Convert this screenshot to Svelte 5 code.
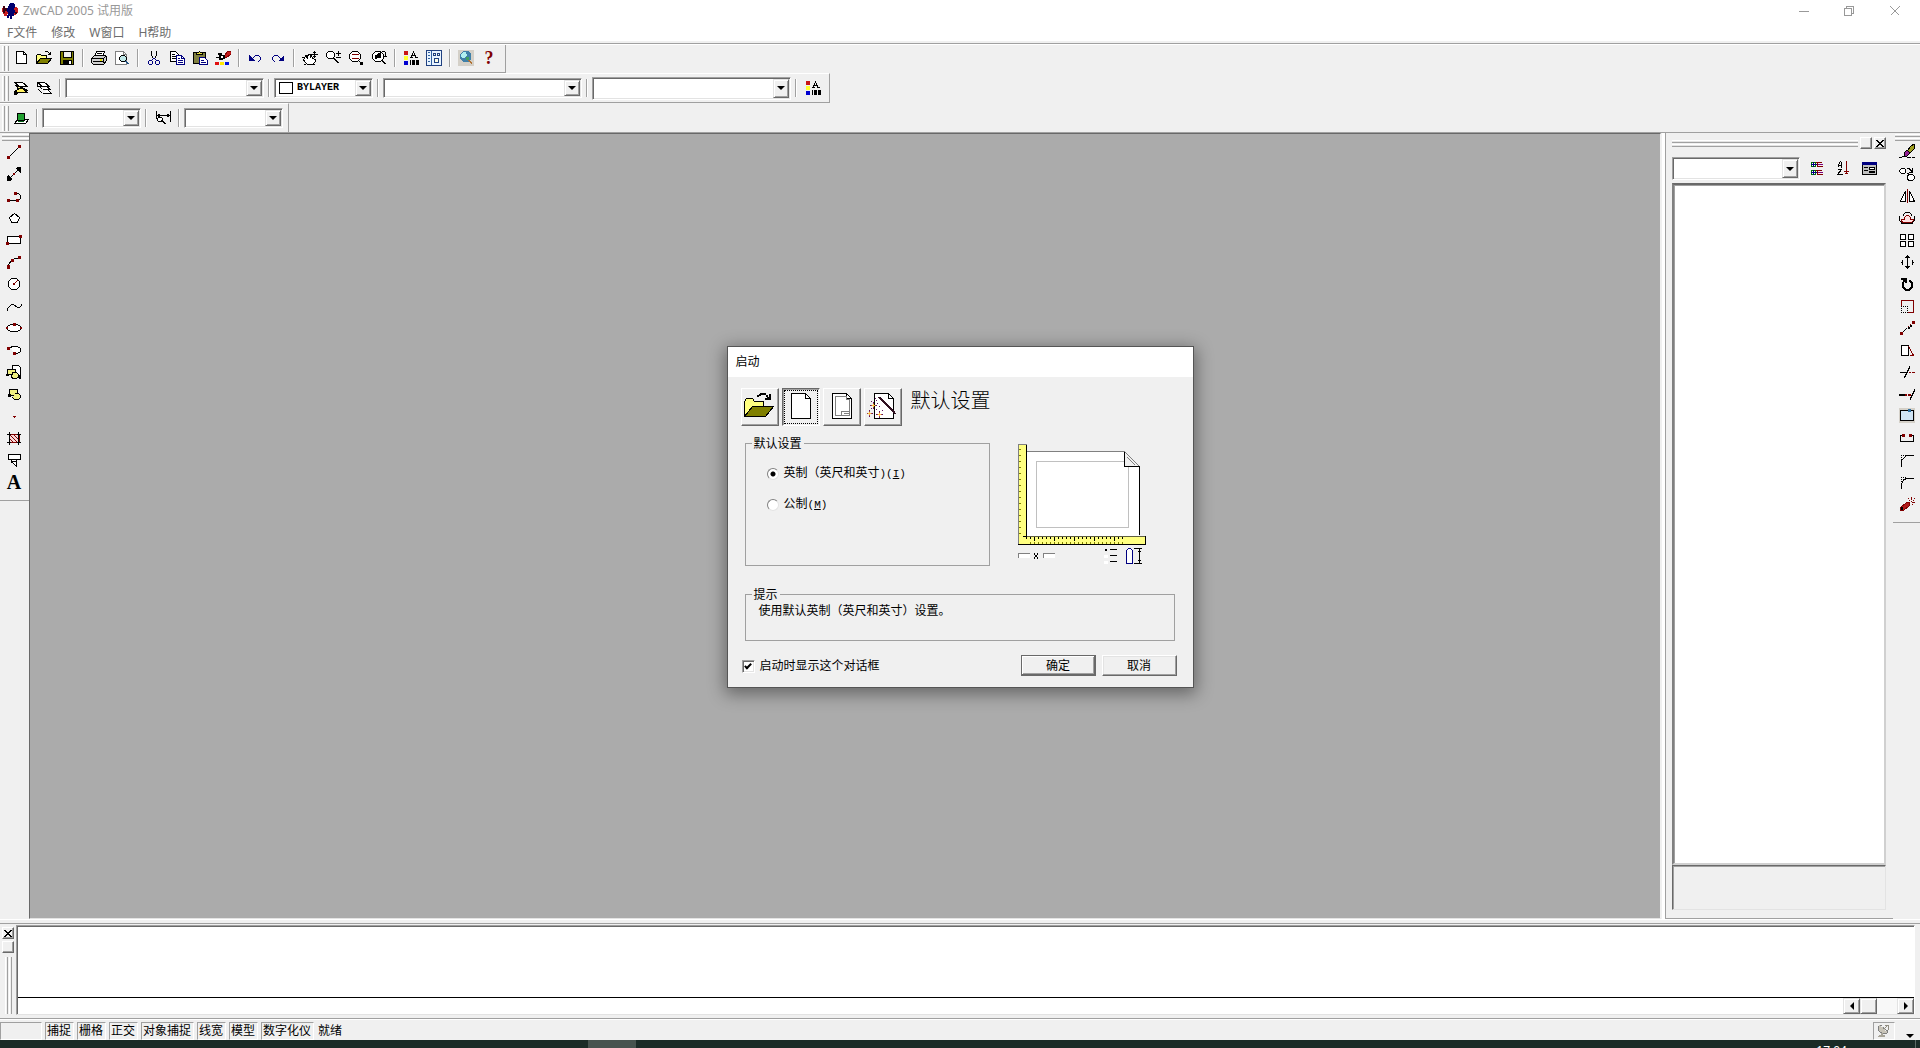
<script>
  const K = '#000'
  const R = '#800000'
  const N = '#000080'
  const Y = '#ffff80'
  const W = '#fff'
  const G = '#808080'

  // every icon is a list of [path, fill, stroke] on a 16px grid
  const icons = {
    logo: [
      ['M0 5h3v2h3v3h5V6h1V4h3v1h1v5h-2v2h-3v-1H5v2H2v-2H1V9H0z', '#c81e1e'],
      ['M1 3h2v2h2v3H3v2H1zM13 9h2v2h-2z', '#400010'],
      ['M7 1h1V0h4v1h1v4h-1v2h1v3h-1v3h-2v3H8v-3H7v2H5v-3h1V9H5V5h1V3h1z', '#00006e'],
    ],
    new: [['M3.5 1.5h7l3 3v9h-10z', W, K], ['M10.5 1.5v3h3', 'none', K]],
    open: [
      ['M0.5 13.5v-8l1-1h3l1 1h5v8z', Y, K],
      ['M0.5 13.5l4-5h11l-4 5z', '#808000', K],
      ['M8.5 2.5l1-1h2l3 3M14.5 1.5v3h-3', 'none', K],
    ],
    save: [
      ['M1.5 1.5h13v13h-13z', '#808000', K],
      ['M4.5 1.5h8v6h-8z', '#f0f0f0', K],
      ['M4 10h9v4H4z', K],
      ['M10 11h2v3h-2z', W],
    ],
    print: [
      ['M5.5 1.5h8l-2 5h-8z', W, K],
      ['M6 3.5h5M5 5.5h5', 'none', K],
      ['M0.5 8.5l3-3h11l1 1v4l-3 4h-10l-2-2z', '#d0d0d0', K],
      ['M1 8.5h11l3-2M12.5 9v4M2 11.5h10', 'none', K],
      ['M9 9h2v2H9z', '#e0e000'],
    ],
    preview: [
      ['M1.5 1.5h8l3 3v10h-11z', W, G],
      ['M9.5 1.5v3h3', 'none', G],
      ['M7.5 5.5h3l2 2v2l-2 2h-3l-2-2v-2z', '#c0e8e8', K],
      ['M11.5 11.5l3 3M12.5 11.5l3 3', 'none', '#205080'],
    ],
    cut: [
      ['M5.5 1v4l2 4M10.5 1v4l-2 4', 'none', K],
      ['M7.5 8.5l-2 2h-2l-1 1v2l1 1h2l1-1v-3M8.5 8.5l2 2h2l1 1v2l-1 1h-2l-1-1v-3', 'none', N],
    ],
    copy: [
      ['M1.5 1.5h5l3 3v7h-8z', W, K],
      ['M3 4.5h3M3 6.5h4M3 8.5h4', 'none', K],
      ['M7.5 5.5h5l3 3v6h-8z', W, N],
      ['M9 8.5h2M9 10.5h5M9 12.5h5M12.5 5.5v3h3', 'none', N],
    ],
    paste: [
      ['M1.5 2.5h12v11h-12z', '#808040', K],
      ['M4.5 4.5v-2h2l1-1 1 1h2v2z', '#e8e040', K],
      ['M7.5 7.5h5l3 3v4h-8z', W, N],
      ['M9 10.5h3M9 12.5h5', 'none', N],
    ],
    brush: [
      ['M9 6l4-5h3v3l-5 4z', '#c01818', R],
      ['M3 3h4v2h3v4H8v1H4V8H1V7h3z', K],
      ['M6 6h2v2H6z', W],
      ['M0 12h4v3H0z', '#e01010'],
      ['M5 12h4v3H5z', '#ffe800'],
      ['M10 12h4v3h-4z', '#0010e0'],
    ],
    undo: [['M5 8.5h1M6 7.5h1M7 6.5h1M8 5.5h4M12 6.5h1M13.5 7v3M12 10.500h1M11 11.500h1', 'none', N], ['M2 5v6h6z', N]],
    redo: [['M10 8.5h1M9 7.500h1M8 6.500h1M4 5.500h4M3 6.500h1M2.500 7v3M3 10.500h1M4 11.500h1', 'none', N], ['M14 5v6H8z', N]],
    pan: [
      ['M1.5 9.5l2-3 2 1V5.5l2-1 2 1 1 3 3 1v2l-3 3h-5l-3-3z', W, K],
      ['M0 7.5h3M3 5.5h4M5.5 7v2M8.5 6v2M2 14.5h2M9 14.500h4', 'none', K],
      ['M12.5 1v7M9 4.5h7M11 2.5h3M11 6.5h3', 'none', K],
    ],
    zoom: [
      ['M3.5 1.5h4l2 2v3l-2 2h-4l-2-2v-3z', W, K],
      ['M8.5 8.5l5 5M9.5 8.5l5 5M13.5 1v5M11 3.5h5M11 7.5h5', 'none', K],
    ],
    zoomwin: [
      ['M4.5 1.5h5l3 3v4l-3 3h-5l-3-3v-4z', W, K],
      ['M4 4.5h7M4 8.5h7', 'none', R],
      ['M10.5 10.5l3 3', 'none', K],
      ['M12 12h3v3h-3z', K],
    ],
    zoomprev: [
      ['M4.5 1.5h5l3 3v4l-3 3h-5l-3-3v-4z', W, K],
      ['M4 9V5h1l5-3v6H7z', K],
      ['M10.5 10.5l4 4M11.500 10.500l4 4M9.5 3.5l2-2h2l1 1v4M12 6.5h4', 'none', K],
    ],
    props: [
      ['M1 1h4v4H1z', '#c81414'],
      ['M1 6h4v4H1z', '#ffff30'],
      ['M1 11h4v4H1z', '#0000d0'],
      ['M10.5 1v2M9.500 3v2M11.500 3v2M8.500 5v2M12.500 5v2M7 7.5h3M12 7.5h3M9 5.5h3', 'none', K],
      ['M7 10h1v5H7zM9 10h3v5H9zM13 10h3v5h-3z', K],
    ],
    center: [
      ['M0.5 0.5h15v15h-15z', '#e8f4ff', '#204080'],
      ['M5.5 1v14M2 2.5h2M2 5.5h2M2 8.5h2M2 11.5h2', 'none', '#3060a0'],
      ['M7.5 3.5h2v2h-2zM11.5 3.5h2v2h-2zM8.5 8.5h4v4h-4z', '#ffffe0', '#204080'],
    ],
    globe: [
      ['M0 0h16v16H0z', '#d4d0c8'],
      ['M5 1h5l3 3v5l-3 3H5L2 9V4z', '#4080a8'],
      ['M5 2h3l1 3-3 3H4L3 5z', '#b0f0f0'],
      ['M8 7h3v3H8z', '#40a060'],
      ['M10.5 10.5l4 4M11.5 10.5l3 3', 'none', '#b07030'],
    ],
    layers: [
      ['M1.5 2.5h8l5 4h-8z', W, K],
      ['M3.5 6.5h3l8 4h-8z', '#f0e890', K],
      ['M1.5 11.5l5-3h3l5 4H6.500z', '#fff060', K],
      ['M2 5.5h4M1 12h3v1H3v1H1z', 'none', K],
      ['M1 12h2v3H1z', K],
    ],
    layerprev: [
      ['M1.5 2.5h7l5 4h-7zM6.500 9.500l-3-3M6.500 9.500h8l-4-3M6.500 13.500l-4-4M6.500 13.500h9l-4-4', W, K],
      ['M1.5 2.500v4h4', 'none', K],
    ],
    block: [['M1.5 13.5l3-4h11l-3 4z', W, K], ['M4.5 3.5h7v7h-7z', '#20a030', K], ['M5 11.5h6', 'none', '#006010']],
    dimension: [
      ['M1.5 1v8M15.5 1v11M2 5.5h13', 'none', K],
      ['M2 5h1V4h2v3H3V6H2zM15 5h-1V4h-2v3h2V6h1z', K],
      ['M3.5 7.5h3l1 1v2l-1 1h-3l-1-1v-2z', W, K],
      ['M6.5 10.5l4 4M7.5 10.5l4 4', 'none', K],
    ],

    line: [['M2.5 13.5l11-11', 'none', K], ['M1 12h3v3H1zM12 1h3v3h-3z', R]],
    xline: [['M1.5 14.5l13-13', 'none', K], ['M1 15v-5l1-1 4 4-1 2zM15 1v5l-1 1-4-4 1-2z', K], ['M7 7h2v2H7z', R]],
    pline: [['M2.5 12.5h8M8.5 5.5h4l2 2v3l-2 2', 'none', K], ['M1 11h3v3H1zM10 11h3v3h-3zM8 4h3v3H8z', R]],
    polygon: [['M8.5 3.5l5 4-2 5h-6l-2-5z', W, K]],
    rect: [['M1.5 4.5h13v7h-13z', W, K], ['M0 10h3v3H0zM13 3h3v3h-3z', R]],
    arc: [['M2.5 13.5v-3l4-5 7-2', 'none', K], ['M1 11h3v4H1zM5 5h3v3H5zM12 2h3v3h-3z', R]],
    circle: [['M5.5 2.5h5l3 3v5l-3 3h-5l-3-3v-5z', W, K], ['M7.5 8.5l4-4', 'none', R], ['M7 7h2v2H7z', R]],
    spline: [['M1.5 12.5v-2l4-4h2l4 3h2l2-2v-2', 'none', K]],
    ellipse: [['M4.5 4.5h7l3 2v3l-3 2h-7l-3-2v-3z', W, K], ['M7 3h3v3H7zM0 7h2v2H0zM14 7h2v2h-2z', R]],
    ellipsearc: [['M4.5 5.5l2-1h5l3 2v3l-3 2h-3', W, K], ['M1 5h3v3H1zM7 10h3v3H7z', R]],
    insert: [
      ['M6.5 1.5h6l2 2v10h-8z', W, K],
      ['M1.5 5.5h8v5h-8z', '#f0f080', K],
      ['M6.5 8.5h4l2 2v2l-2 2h-4l-1-2z', '#f0f080', K],
      ['M0 10h3v2H0zM13 11h2v4h-2z', K],
    ],
    makeblock: [
      ['M3.5 3.5h8v6h-8z', '#f0f080', K],
      ['M8.5 7.5h4l2 2v2l-2 2h-4l-2-2', '#f0f080', K],
      ['M2 8h3v3H2z', K],
    ],
    point: [['M7 8h3v1H7zM8 9h1v1H8z', R]],
    hatch: [
      ['M3.5 4.5h10v8h-10z', '#f8d8d8', R],
      ['M3.5 4.5l8 8M7.5 4.5l6 6M3.5 8.5l4 4M11.5 4.5l2 2', 'none', R],
      ['M3.5 2v13M12.5 2v13M1 4.5h4M11 4.5h4M1 12.5h4M11 12.5h4', 'none', K],
    ],
    region: [['M2.5 2.5h12v5h-12z', W, K], ['M5.5 8v2l5 4v-6', W, K], ['M6 9.5h4', 'none', K]],

    erase: [
      ['M8 7l4-5 3-2v5l-4 4z', '#a0a020', K],
      ['M5 9l3-3 3 3-3 3H5z', '#902090', K],
      ['M0 13.5h3M8 13.5h4M13 13.5h3M3 12h4v1', 'none', K],
    ],
    copyobj: [
      ['M2.5 2.5h3l1 1v3l-1 1h-3l-2-2v-1z', W, K],
      ['M9.5 8.5h4l2 2v2l-2 2h-4l-1-2v-2z', W, K],
      ['M8 2.5h2l3 3M13.5 2v4h-4M8 7.5h2', 'none', K],
    ],
    mirror: [['M6.5 3v10.5h-5zM10.5 3v10.5h5z', W, K], ['M8.5 1v14', 'none', R]],
    offset: [
      ['M2.5 9.500h3v-2l2-2h2l2 2v2h3v2l-2 1h-8l-2-1z', '#ffe0e0', R],
      ['M0.5 6v4l2 3h11l2-3V6M4.500 6V4.500l2-2h4l2 2V6', 'none', K],
    ],
    array: [['M1.5 2.5h5v5h-5zM9.5 2.5h5v5h-5zM1.5 9.5h5v5h-5zM9.5 9.5h5v5h-5z', W, K]],
    move: [['M8.5 1v14', 'none', K], ['M6 4V3h1V2h1V1h1v1h1v1h1v1zM6 12v1h1v1h1v1h1v-1h1v-1h1v-1zM4 6v5H3V9H2V8h1V6zM13 6v5h1V9h1V8h-1V6z', K]],
    rotate: [
      ['M4.5 5.500L3.5 7v4l3 3h4l3-3V7l-3-3', 'none', K],
      ['M5.5 5.500L4.5 7v4l2 2h4l2-2V7l-2-2', 'none', K],
      ['M2 2h6v5H6V5H4V4H2z', K],
    ],
    scale: [['M2.5 9V2.500h12v12H9', 'none', R], ['M2 8h1v1H2zM4 8h1v1H4zM6 8h1v1H6zM8 8h1v1H8zM2 10h1v1H2zM2 12h1v1H2zM2 14h1v1H2zM4 14h1v1H4zM6 14h1v1H6zM8 14h1v1H8zM8 10h1v1H8zM8 12h1v1H8z', K]],
    stretchline: [['M3.5 12.5l4-4M9 7h1v1H9zM11 5h1v1h-1z', 'none', K], ['M1 12h3v3H1zM13 1h3v3h-3zM9 6h1v1H9zM11 4h1v1h-1z', R]],
    stretch: [['M2.5 3.5h7v10h-7z', W, K], ['M9.5 4l5 9.500h-4', 'none', R]],
    trim: [['M1 8.5h7M5.5 14v-2h1v-2h1v-2h1V6h1V4h1V2', 'none', K], ['M10 8.5h2M13 8.5h3', 'none', R]],
    extend: [['M0 8h6v2H0z', K], ['M6 8h2v2H6zM9 8h3v2H9z', R], ['M15.5 3v2h-1v2h-1v2h-1v2h-1v3', 'none', K]],
    break: [['M0 0h16v15H0z', '#d4d0c8'], ['M1.5 2.5h13v10h-13z', '#d0e4f4', K], ['M9 1h3v3H9z', '#3070a0']],
    breakpt: [['M3 5.5H1.500v6h13v-6H13', 'none', K], ['M3 4h3v3H3zM10 4h3v3h-3z', R]],
    chamfer: [['M2.5 15V8.500l5-5h7', 'none', K], ['M2 3h1v1H2zM4 3h1v1H4zM6 3h1v1H6zM2 5h1v1H2zM2 7h1v1H2z', K]],
    fillet: [['M2.5 15v-5l2-4 4-2h6', 'none', K], ['M2 3h1v1H2zM4 3h1v1H4zM6 3h1v1H6zM2 5h1v1H2zM2 7h1v1H2z', K]],
    explode: [
      ['M1.500 14.500v-3l6-5h3v3l-6 5z', '#b01818', R],
      ['M2 11h2v3H2z', K],
      ['M10 4h1v1h-1zM9 2h1v1H9zM12 1h1v3h-1zM14 4h1v1h-1zM15 2h1v1h-1zM13 6h3v1h-3zM13 8h1v1h-1zM12 5h1v1h-1z', R],
    ],
    tree: [
      ['M1.5 1.500h4v4h-4zM1.5 9.500h4v4h-4z', W, '#007000'],
      ['M1 3.500h6M3.500 1v5M1 11.500h6M3.500 9v5', 'none', N],
      ['M6 1.500h6M8 5.500h5M6 9.500h6M8 13.500h5M7.500 2v4M7.500 10v4', 'none', R],
      ['M8 3.500h5M8 11.500h5', 'none', '#800080'],
    ],
    sort: [
      ['M2.500 6V3.500l2-3 1 1v5M2 4.500h4M1.500 8.500h4l-4 5h5', 'none', K],
      ['M10.500 0v13M8 10.500h5M9 12.500h3', 'none', R],
    ],
    propsheet: [
      ['M0.500 1.500h14v12H0.500z', '#c0c0c0', K],
      ['M0 1h15v3H0z', N],
      ['M2 6.500h4M2 9.500h4', 'none', K],
      ['M7.500 6.500h5v2h-5zM7.500 10.500h5v1h-5z', W, K],
    ],
    dish: [
      ['M4 2h2v2h2v2h2v2h2v3H7v-1H5V8H3V4h1z', '#c8c4b8'],
      ['M3.500 3v5M4 8.500h1M5 9.500h2M7 10.500h5M12.500 7v3M5 2.500h2M8 4.500l4 3', 'none', G],
      ['M8.500 6.500l3-3M10 2.500h4M13.500 3v4', 'none', '#908c80'],
      ['M4 12h6v2H3v-1h1zM6 10h2v2H6z', '#a8a498'],
    ],
    minimize: [['M4 8.500h10', 'none', '#999']],
    restore: [['M3.500 5.500h7v7h-7zM5.500 5V3.500h7v7H11', 'none', '#999']],
    close: [['M3.500 3.500l9 9M12.500 3.500l-9 9', 'none', '#999']],
  }

  // the four start modes are drawn on a 32px grid
  const startIcons = {
    open: [
      ['M0.500 25.500v-15l2-3h6l2 3h9v15z', Y, K],
      ['M0.500 25.500l8-10h21l-8 10z', '#808000', K],
      ['M13 4h2V3h1V2h6v2h-5v1h-2v1h-2z', K],
      ['M22 4h2v2h1V3h2v6h-6V7h2V6h-1z', K],
    ],
    blank: [['M6.500 2.500h14l5 5v20h-19z', W, K], ['M20.500 2.500v5h5', 'none', K]],
    template: [
      ['M6.500 2.500h14l5 5v20h-19z', W, K],
      ['M20.500 2.500v5h5', 'none', K],
      ['M9.500 5.500h11v3h3v16h-14z', W, G],
      ['M15.500 20.500h8v4h-8zM18 22.500h5', 'none', G],
    ],
    wizard: [
      ['M7.500 2.500h14l5 5v20h-19z', W, K],
      ['M21.500 2.500v5h5', 'none', K],
      ['M11.500 6.500l17 17M12.500 6.500l17 17M13.500 6.500l15 15', 'none', '#301020'],
      ['M6 11h1v1H6zM6 17h1v1H6zM3 14h1v1H3zM9 14h1v1H9zM2 19h1v1H2zM2 25h1v1H2zM0 22h1v1H0zM5 22h1v1H5zM12 20h1v1h-1zM12 26h1v1h-1zM9 23h1v1H9zM15 23h1v1h-1zM9 9h1v1H9zM10 12h1v1h-1zM12 15h1v1h-1zM9 18h1v1H9zM4 17h1v1H4zM15 19h1v1h-1zM8 7h1v1H8zM4 10h1v1H4z', '#601060'],
      ['M6 12h1v2h2v1H7v2H6v-2H4v-1h2zM2 20h1v2h2v1H3v2H2v-2H0v-1h2zM12 21h1v2h2v1h-2v2h-1v-2h-2v-1h2z', '#a04040'],
      ['M6 13h1v3H6zM2 21h1v3H2zM12 22h1v3h-1zM5 14h3v1H5zM1 22h3v1H1zM11 23h3v1h-3z', '#ffc040'],
    ],
  }

  const standardBar = [
    [['new', '新建'], ['open', '打开'], ['save', '保存']],
    [['print', '打印'], ['preview', '打印预览']],
    [['cut', '剪切'], ['copy', '复制'], ['paste', '粘贴'], ['brush', '特性匹配']],
    [['undo', '放弃'], ['redo', '重做']],
    [['pan', '平移'], ['zoom', '缩放'], ['zoomwin', '窗口缩放'], ['zoomprev', '上一个']],
    [['props', '特性'], ['center', '设计中心']],
    [['globe', '网络'], ['help', '帮助']],
  ]

  const drawBar = [
    ['line', '直线'], ['xline', '构造线'], ['pline', '多段线'], ['polygon', '多边形'],
    ['rect', '矩形'], ['arc', '圆弧'], ['circle', '圆'], ['spline', '样条曲线'],
    ['ellipse', '椭圆'], ['ellipsearc', '椭圆弧'], ['insert', '插入块'], ['makeblock', '创建块'],
    ['point', '点'], ['hatch', '图案填充'], ['region', '面域'], ['text', '文字'],
  ]

  const modifyBar = [
    ['erase', '删除'], ['copyobj', '复制对象'], ['mirror', '镜像'], ['offset', '偏移'],
    ['array', '阵列'], ['move', '移动'], ['rotate', '旋转'], ['scale', '比例'],
    ['stretchline', '拉长'], ['stretch', '拉伸'], ['trim', '修剪'], ['extend', '延伸'],
    ['break', '打断'], ['breakpt', '打断于点'], ['chamfer', '倒角'], ['fillet', '圆角'], ['explode', '分解'],
  ]

  const letters = { help: '?', text: 'A' }
  const menus = ['F文件', '修改', 'W窗口', 'H帮助']
  const toggles = ['捕捉', '栅格', '正交', '对象捕捉', '线宽', '模型', '数字化仪']
  const modes = [['open', '打开图形'], ['blank', '默认设置'], ['template', '使用样板'], ['wizard', '使用向导']]

  const ticksY = Array.from({ length: 15 }, (_, i) => 5 + i * 6)
  const ticksX = Array.from({ length: 24 }, (_, i) => 12 + i * 4)

  let mode = $state('blank')
  let units = $state('imperial')
  let showOnStart = $state(true)
</script>

{#snippet shapes(list, size)}
  <svg width={size} height={size} viewBox="0 0 {size} {size}" shape-rendering="crispEdges" aria-hidden="true">
    {#each list as [d, fill, stroke]}
      <path {d} {fill} stroke={stroke ?? 'none'} />
    {/each}
  </svg>
{/snippet}

{#snippet tool(name, label)}
  <button class="tool" aria-label={label}>
    {#if letters[name]}
      <span class="letter {name}">{letters[name]}</span>
    {:else}
      {@render shapes(icons[name], 16)}
    {/if}
  </button>
{/snippet}

{#snippet combo(kind, label, value = '')}
  <span class="combo {kind}">
    {#if value}<span class="swatch"></span>{/if}
    <select aria-label={label}><option>{value}</option></select>
    <span class="drop"></span>
  </span>
{/snippet}

{#snippet cross()}
  <svg width="8" height="8" viewBox="0 0 8 8" shape-rendering="crispEdges" aria-hidden="true">
    <path d="M0 1h2v1h1v1h2V2h1V1h2v1H7v1H6v1H5v1h1v1h1v1h1v1H6V7H5V6H3v1H2v1H0V7h1V6h1V5h1V4H2V3H1V2H0z" />
  </svg>
{/snippet}

<div class="app">
  <header class="title">
    {@render shapes(icons.logo, 16)}
    <h1>ZwCAD 2005 试用版</h1>
    <button aria-label="最小化">{@render shapes(icons.minimize, 16)}</button>
    <button aria-label="还原">{@render shapes(icons.restore, 16)}</button>
    <button aria-label="关闭">{@render shapes(icons.close, 16)}</button>
  </header>

  <nav class="menu">
    {#each menus as m}
      <button>{m}</button>
    {/each}
  </nav>

  <div class="bars">
    <div class="bar">
      <i class="grip"></i>
      {#each standardBar as group, i}
        {#if i > 0}<i class="sep"></i>{/if}
        {#each group as [name, label]}
          {@render tool(name, label)}
        {/each}
      {/each}
    </div>
    <div class="bar">
      <i class="grip"></i>
      {@render tool('layers', '图层')}
      {@render tool('layerprev', '上一图层')}
      <i class="sep"></i>
      {@render combo('wide', '图层')}
      <i class="sep"></i>
      {@render combo('short', '颜色', 'BYLAYER')}
      <i class="sep"></i>
      {@render combo('wide', '线型')}
      <i class="sep"></i>
      {@render combo('wide tall', '线宽')}
      <i class="sep"></i>
      {@render tool('props', '特性')}
    </div>
    <div class="bar">
      <i class="grip"></i>
      {@render tool('block', '块')}
      <i class="sep"></i>
      {@render combo('short', '块名')}
      <i class="sep"></i>
      {@render tool('dimension', '标注样式')}
      <i class="sep"></i>
      {@render combo('short', '标注样式')}
    </div>
  </div>

  <main class="work">
    <div class="side">
      <div class="vbar">
        <i class="hgrip"></i>
        {#each drawBar as [name, label]}
          {@render tool(name, label)}
        {/each}
      </div>
    </div>

    <div class="canvas"></div>

    <aside class="panel">
      <div class="panel-head">
        <i class="hgrip"></i>
        <button class="mini" aria-label="折叠"></button>
        <button class="mini" aria-label="关闭面板">{@render cross()}</button>
      </div>
      <div class="panel-tools">
        {@render combo('tall', '对象')}
        {@render tool('tree', '分类')}
        {@render tool('sort', '排序')}
        {@render tool('propsheet', '特性页')}
      </div>
      <div class="sheet"></div>
      <div class="hint"></div>
    </aside>

    <div class="side">
      <div class="vbar">
        <i class="hgrip"></i>
        {#each modifyBar as [name, label]}
          {@render tool(name, label)}
        {/each}
      </div>
    </div>
  </main>

  <section class="command">
    <div class="command-grip">
      <button class="mini" aria-label="关闭命令行">{@render cross()}</button>
      <button class="mini" aria-label="折叠命令行"></button>
      <i class="grip"></i>
    </div>
    <div class="console">
      <div class="log"></div>
      <div class="prompt">
        <input aria-label="命令" />
        <button class="scroll" aria-label="向左"><i class="arrow left"></i></button>
        <button class="scroll" aria-label="滚动块"></button>
        <span class="track"></span>
        <button class="scroll" aria-label="向右"><i class="arrow right"></i></button>
      </div>
    </div>
  </section>

  <footer class="status">
    <span class="cell coords"></span>
    {#each toggles as t}
      <button class="cell">{t}</button>
    {/each}
    <span class="ready">就绪</span>
    <button class="cell dish" aria-label="通讯中心">{@render shapes(icons.dish, 16)}</button>
    <button class="more" aria-label="状态栏菜单"></button>
  </footer>

  <div class="taskbar">
    <span class="task"></span>
    <span class="clock">17:04</span>
  </div>

  <div class="overlay">
    <div class="dialog" role="dialog" aria-labelledby="dialog-title">
      <div class="dialog-title" id="dialog-title">启动</div>
      <div class="dialog-body">
        <div class="modes">
          {#each modes as [id, label]}
            <button class="mode" class:active={mode === id} aria-label={label} onclick={() => (mode = id)}>
              {@render shapes(startIcons[id], 32)}
            </button>
          {/each}
          <h2>默认设置</h2>
        </div>

        <div class="settings">
          <fieldset class="units">
            <legend>默认设置</legend>
            <label>
              <input type="radio" name="units" value="imperial" bind:group={units} />
              <span>英制（英尺和英寸<kbd>)(<u>I</u>)</kbd></span>
            </label>
            <label>
              <input type="radio" name="units" value="metric" bind:group={units} />
              <span>公制<kbd>(<u>M</u>)</kbd></span>
            </label>
          </fieldset>

          <svg class="sample" width="128" height="121" viewBox="0 0 128 121" shape-rendering="crispEdges" aria-hidden="true">
            <path d="M8 7.500h98l15 15v69H8z" fill="#fff" />
            <path d="M8 7.500h98" stroke="#808080" />
            <path d="M121.500 22v69" stroke="#000" />
            <path d="M106 17.500H18.500v66h92V23" fill="none" stroke="#c0c0c0" />
            <path d="M106.500 7.500l15 15h-15z" fill="#f0f0f0" stroke="#000" />
            <path d="M106.500 7.500l15 15M109 13l8 8" stroke="#808080" />
            <path d="M0.500 0.500h8v96h-8z" fill="#ffff80" stroke="#808080" />
            <path d="M0.500 92.500h127v8H0.500z" fill="#ffff80" stroke="#000" />
            <path d="M9 92.500h118" stroke="#606040" />
            <path d="M1 91h8v4H1z" fill="#ffff80" />
            <path d="M0.500 90v10" stroke="#808080" />
            <path d="M8.500 1v94M5 92.500h4" stroke="#000" />
            {#each ticksY as y}
              <path d="M1 {y}.500h2" stroke="#808000" />
            {/each}
            {#each ticksX as x, i}
              <path d="M{x}.500 93v{i % 5 === 1 ? 4 : 2}" stroke="#000" />
              <path d="M{x}.500 98v2" stroke="#808000" />
            {/each}
            <path d="M0 109h12v5H0zM25 109h12v5H25z" fill="#fff" />
            <path d="M0.500 114v-4.500H12M25.500 114v-4.500H37" fill="none" stroke="#808080" />
            <path d="M16 109.500l4 5M20 109.500l-4 5" stroke="#000" />
            <path d="M87 105h2v2h-2z" fill="#000" />
            <path d="M86 111h4v3h-4zM86 117h4v3h-4z" fill="#fff" />
            <path d="M92 105.500h7M92 111.500h7M92 117.500h7" stroke="#000" />
            <path d="M108.500 119.500v-13l2-2h2l2 2v13z" fill="#fff" stroke="#000080" />
            <path d="M116 104.500h8M116 119.500h8M121.500 105v14M120 107.500h3M120 116.500h3" stroke="#000" />
          </svg>
        </div>

        <fieldset class="tips">
          <legend>提示</legend>
          使用默认英制（英尺和英寸）设置。
        </fieldset>

        <div class="actions">
          <label>
            <input type="checkbox" bind:checked={showOnStart} />
            <span>启动时显示这个对话框</span>
          </label>
          <button class="push default">确定</button>
          <button class="push">取消</button>
        </div>
      </div>
    </div>
  </div>
</div>

<style>
  :global(body) {
    margin: 0;
    background: #f0f0f0;
  }

  .app {
    position: relative;
    display: flex;
    flex-direction: column;
    min-height: 100vh;
    overflow: hidden;
    background: #f0f0f0;
    font: 12px/16px "Noto Sans", "Noto Sans CJK SC", sans-serif;
    color: #000;
  }

  .app *, .app *::before, .app *::after { box-sizing: border-box; }

  button {
    padding: 0;
    border: 0;
    background: none;
    font: inherit;
    color: inherit;
  }

  svg { display: block; flex: none; }

  /* title and menu */
  .title {
    display: flex;
    align-items: center;
    height: 22px;
    padding-left: 2px;
    background: #fff;
  }

  h1 {
    flex: 1;
    margin: 0 0 0 5px;
    font-size: 12px;
    font-weight: 400;
    color: #999;
  }

  .title button {
    display: grid;
    place-items: center;
    width: 46px;
    height: 20px;
  }

  .title button:last-child { margin-right: 2px; }

  .menu {
    display: flex;
    gap: 14px;
    height: 19px;
    padding: 3px 7px 0;
    background: #fff;
    color: #6d6d6d;
  }

  .menu button { height: 16px; }

  /* docked toolbars */
  .bars {
    border-bottom: 1px solid #a0a0a0;
    padding-top: 4px;
    background: linear-gradient(#f0f0f0 2px, #a0a0a0 2px 3px, #fff 3px 4px, #f0f0f0 4px);
  }

  .bar {
    display: flex;
    align-items: center;
    width: max-content;
    height: 28px;
    padding: 0 5px 0 2px;
    border-right: 1px solid #a0a0a0;
    border-bottom: 1px solid #a0a0a0;
    border-top: 1px solid #fff;
  }

  .bar:nth-child(1) { border-top: 0; padding-bottom: 1px; }
  .bar:nth-child(2) { height: 30px; }
  .bar:nth-child(3) { height: 29px; border-bottom: 0; }

  .grip {
    flex: none;
    width: 7px;
    height: 25px;
    background: linear-gradient(90deg, #fff 1px, #f0f0f0 1px 2px, #a0a0a0 2px 3px, #f0f0f0 3px 4px, #fff 4px 5px, #f0f0f0 5px 6px, #a0a0a0 6px 7px);
  }

  .hgrip {
    height: 7px;
    background: linear-gradient(#fff 1px, #e3e3e3 1px 2px, #a0a0a0 2px 3px, #f0f0f0 3px 4px, #fff 4px 5px, #e3e3e3 5px 6px, #a0a0a0 6px 7px);
  }

  .tool {
    display: flex;
    align-items: center;
    flex: none;
    width: 23px;
    height: 22px;
    padding-left: 4px;
  }

  .letter {
    width: 16px;
    text-align: center;
    font: bold 20px/22px "Liberation Serif", serif;
  }

  .letter.help { font-size: 18px; color: #800000; }

  .sep {
    width: 10px;
    height: 18px;
    background: linear-gradient(90deg, transparent 4px, #a0a0a0 4px 5px, #fff 5px 6px, transparent 6px);
  }

  .bar:first-child .sep { width: 9px; }

  .combo {
    position: relative;
    display: flex;
    height: 20px;
    border: 1px solid;
    border-color: #a0a0a0 #fff #fff #a0a0a0;
    box-shadow: inset 1px 1px #696969, inset -1px -1px #e3e3e3;
    background: #fff;
  }

  .wide { width: 199px; }
  .short { width: 99px; }
  .tall { height: 23px; }

  .combo select {
    flex: 1;
    min-width: 0;
    margin: 1px;
    padding: 0 0 0 3px;
    border: 0;
    appearance: none;
    background: transparent;
    font: bold 10px/16px "Liberation Mono", monospace;
    color: #000;
  }

  .swatch {
    width: 14px;
    height: 12px;
    margin: 3px 0 0 4px;
    border: 1px solid #000;
  }

  .drop {
    display: grid;
    place-items: center;
    width: 16px;
    margin: 1px 1px 1px 0;
    border: 1px solid;
    border-color: #e3e3e3 #696969 #696969 #e3e3e3;
    box-shadow: inset 1px 1px #fff, inset -1px -1px #a0a0a0;
    background: #f0f0f0;
    pointer-events: none;
  }

  .drop::before, .more::before {
    content: "";
    border: 4px solid transparent;
    border-top-color: #000;
    border-bottom: 0;
  }

  /* work area */
  .work {
    display: grid;
    grid-template-columns: 29px 1fr 232px 27px;
    flex: 1;
    min-height: 0;
  }

  .vbar {
    display: flex;
    flex-direction: column;
    padding: 1px 0 7px 2px;
    border-bottom: 1px solid #a0a0a0;
  }

  .canvas {
    border: 1px solid;
    border-color: #696969 #f0f0f0 #e3e3e3 #696969;
    box-shadow: 1px 0 #f0f0f0;
    background: #ababab;
  }

  .panel {
    display: flex;
    flex-direction: column;
    margin-left: 4px;
    padding: 4px 7px 8px 6px;
    border-left: 1px solid #a0a0a0;
    border-bottom: 1px solid #a0a0a0;
    box-shadow: -3px 0 #fff;
  }

  .panel-head {
    display: flex;
    align-items: center;
    gap: 2px;
  }

  .panel-head .hgrip { flex: 1; }

  .mini {
    display: grid;
    place-items: center;
    width: 12px;
    height: 12px;
    border: 1px solid;
    border-color: #fff #696969 #696969 #fff;
    box-shadow: inset -1px -1px #a0a0a0;
  }

  .panel-tools {
    display: flex;
    align-items: center;
    gap: 3px;
    margin: 8px 5px 3px 0;
  }

  .panel-tools .combo { flex: 1; margin-right: 3px; }
  .panel-tools .tool { height: 18px; }

  .sheet, .hint {
    border: 1px solid;
    border-color: #696969 #e3e3e3 #e3e3e3 #696969;
    box-shadow: inset 1px 1px #a0a0a0;
  }

  .sheet {
    flex: 1;
    border-width: 2px;
    border-color: #696969 #d0d0d0 #d0d0d0 #808080;
    background: #fff;
  }

  .hint { height: 45px; }

  /* command line */
  .command {
    display: flex;
    gap: 2px;
    height: 100px;
    padding: 6px 5px 3px 2px;
    border-bottom: 1px solid #a0a0a0;
    background: linear-gradient(#fff 1px, #f0f0f0 1px 4px, #a0a0a0 4px 5px, #f0f0f0 5px);
  }

  .command-grip {
    display: flex;
    flex-direction: column;
    align-items: center;
    gap: 2px;
    padding-top: 2px;
  }

  .command-grip .grip { flex: 1; margin: 2px 0 1px; }

  .console {
    display: flex;
    flex-direction: column;
    flex: 1;
    border: 1px solid;
    border-color: #a0a0a0 #fff #e3e3e3 #a0a0a0;
    box-shadow: inset 1px 1px #696969;
    background: #fff;
  }

  .log {
    flex: 1;
    margin-left: 1px;
    border-bottom: 1px solid #000;
  }

  .prompt {
    display: flex;
    height: 16px;
    padding-left: 2px;
  }

  .prompt input {
    flex: 1;
    border: 0;
    padding: 0;
    outline: 0;
    font: inherit;
  }

  .scroll {
    display: grid;
    place-items: center;
    width: 17px;
    border: 1px solid;
    border-color: #e3e3e3 #696969 #696969 #e3e3e3;
    box-shadow: inset 1px 1px #fff, inset -1px -1px #a0a0a0;
    background: #f0f0f0;
  }

  .track { width: 20px; background: #f8f8f8; }

  .arrow { border: 4px solid transparent; }
  .arrow.left { border-left: 0; border-right-color: #000; }
  .arrow.right { border-right: 0; border-left-color: #000; }

  /* status bar */
  .status {
    display: flex;
    align-items: center;
    gap: 3px;
    height: 21px;
    padding: 1px 2px 0 0;
    border-top: 1px solid #fff;
  }

  .cell {
    height: 18px;
    padding: 0 2px 0 1px;
    border: 1px solid;
    border-color: #a0a0a0 #fff #fff #a0a0a0;
    line-height: 16px;
  }

  .coords { width: 42px; }
  .ready { flex: 1; margin-left: 1px; }
  .dish { width: 22px; }

  .more {
    align-self: flex-end;
    width: 17px;
    height: 8px;
    margin-left: 3px;
    line-height: 0;
  }

  .more::before { display: inline-block; }

  .taskbar {
    display: flex;
    height: 8px;
    overflow: hidden;
    padding: 0 4px 0 588px;
    background: #1b2b27;
  }

  .task { width: 48px; background: #47534f; }

  .clock {
    flex: 1;
    padding: 3px 68px 0 0;
    border-right: 1px solid #5d6a66;
    text-align: right;
    color: #fff;
  }

  /* start dialog */
  .overlay {
    position: absolute;
    inset: 0;
    display: grid;
    place-items: center;
    padding-bottom: 15px;
    pointer-events: none;
  }

  .dialog {
    width: 467px;
    border: 1px solid #555;
    background: #f0f0f0;
    box-shadow: 0 4px 16px 2px rgba(0, 0, 0, 0.4);
    pointer-events: auto;
  }

  .dialog-title {
    height: 30px;
    padding-left: 8px;
    background: #fff;
    line-height: 30px;
  }

  .dialog-body { padding: 11px 16px 11px 13px; }

  .modes { display: flex; gap: 3px; }

  .mode {
    display: grid;
    place-items: center;
    width: 38px;
    height: 38px;
    border: 1px solid;
    border-color: #fff #696969 #696969 #fff;
    box-shadow: inset -1px -1px #a0a0a0;
  }

  .mode.active {
    border-color: #696969 #fff #fff #696969;
    box-shadow: inset 1px 1px #a0a0a0;
    outline: 1px dotted #000;
    outline-offset: -3px;
  }

  h2 {
    margin: 0 0 0 6px;
    font-size: 20px;
    font-weight: 300;
    line-height: 26px;
  }

  fieldset {
    margin: 0;
    border: 1px solid #a0a0a0;
  }

  legend {
    padding: 0 2px;
    line-height: 16px;
  }

  .settings {
    display: flex;
    gap: 28px;
    margin: 10px 0 0 4px;
  }

  .units {
    width: 245px;
    height: 130px;
    padding: 14px 20px 0 21px;
  }

  .units legend, .tips legend { margin-left: -15px; }

  .units label {
    display: flex;
    align-items: center;
    gap: 5px;
    height: 16px;
    margin-bottom: 15px;
  }

  kbd { font: 11px/16px "Liberation Mono", monospace; }

  input[type="radio"] {
    appearance: none;
    width: 12px;
    height: 12px;
    margin: 0;
    border: 1px solid;
    border-color: #808080 #e3e3e3 #e3e3e3 #808080;
    border-radius: 50%;
    background: #fff;
  }

  input[type="radio"]:checked { background: radial-gradient(circle, #000 2px, #fff 3px); }

  .sample { margin-top: 8px; }

  .tips {
    height: 54px;
    margin: 21px 2px 0 4px;
    padding: 0 0 0 13px;
  }

  .tips legend { margin-left: -7px; }

  .actions {
    display: flex;
    align-items: center;
    gap: 6px;
    margin-top: 14px;
  }

  .actions label {
    display: flex;
    align-items: center;
    flex: 1;
    gap: 5px;
    padding: 2px 0 0 1px;
  }

  input[type="checkbox"] {
    appearance: none;
    display: grid;
    place-items: center;
    width: 13px;
    height: 13px;
    margin: 0;
    border: 1px solid;
    border-color: #a0a0a0 #fff #fff #a0a0a0;
    box-shadow: inset 1px 1px #696969, inset -1px -1px #e3e3e3;
    background: #fff;
  }

  input[type="checkbox"]:checked::before {
    content: "";
    width: 4px;
    height: 7px;
    margin-bottom: 2px;
    border: solid #000;
    border-width: 0 2px 2px 0;
    transform: rotate(45deg);
  }

  .push {
    width: 75px;
    height: 21px;
    border: 1px solid;
    border-color: #fff #696969 #696969 #fff;
    box-shadow: inset -1px -1px #a0a0a0, inset 1px 1px #e3e3e3;
    line-height: 19px;
  }

  .push.default {
    border-color: #696969;
    box-shadow: inset -1px -1px #696969, inset 1px 1px #fff, inset -2px -2px #a0a0a0;
  }
</style>
